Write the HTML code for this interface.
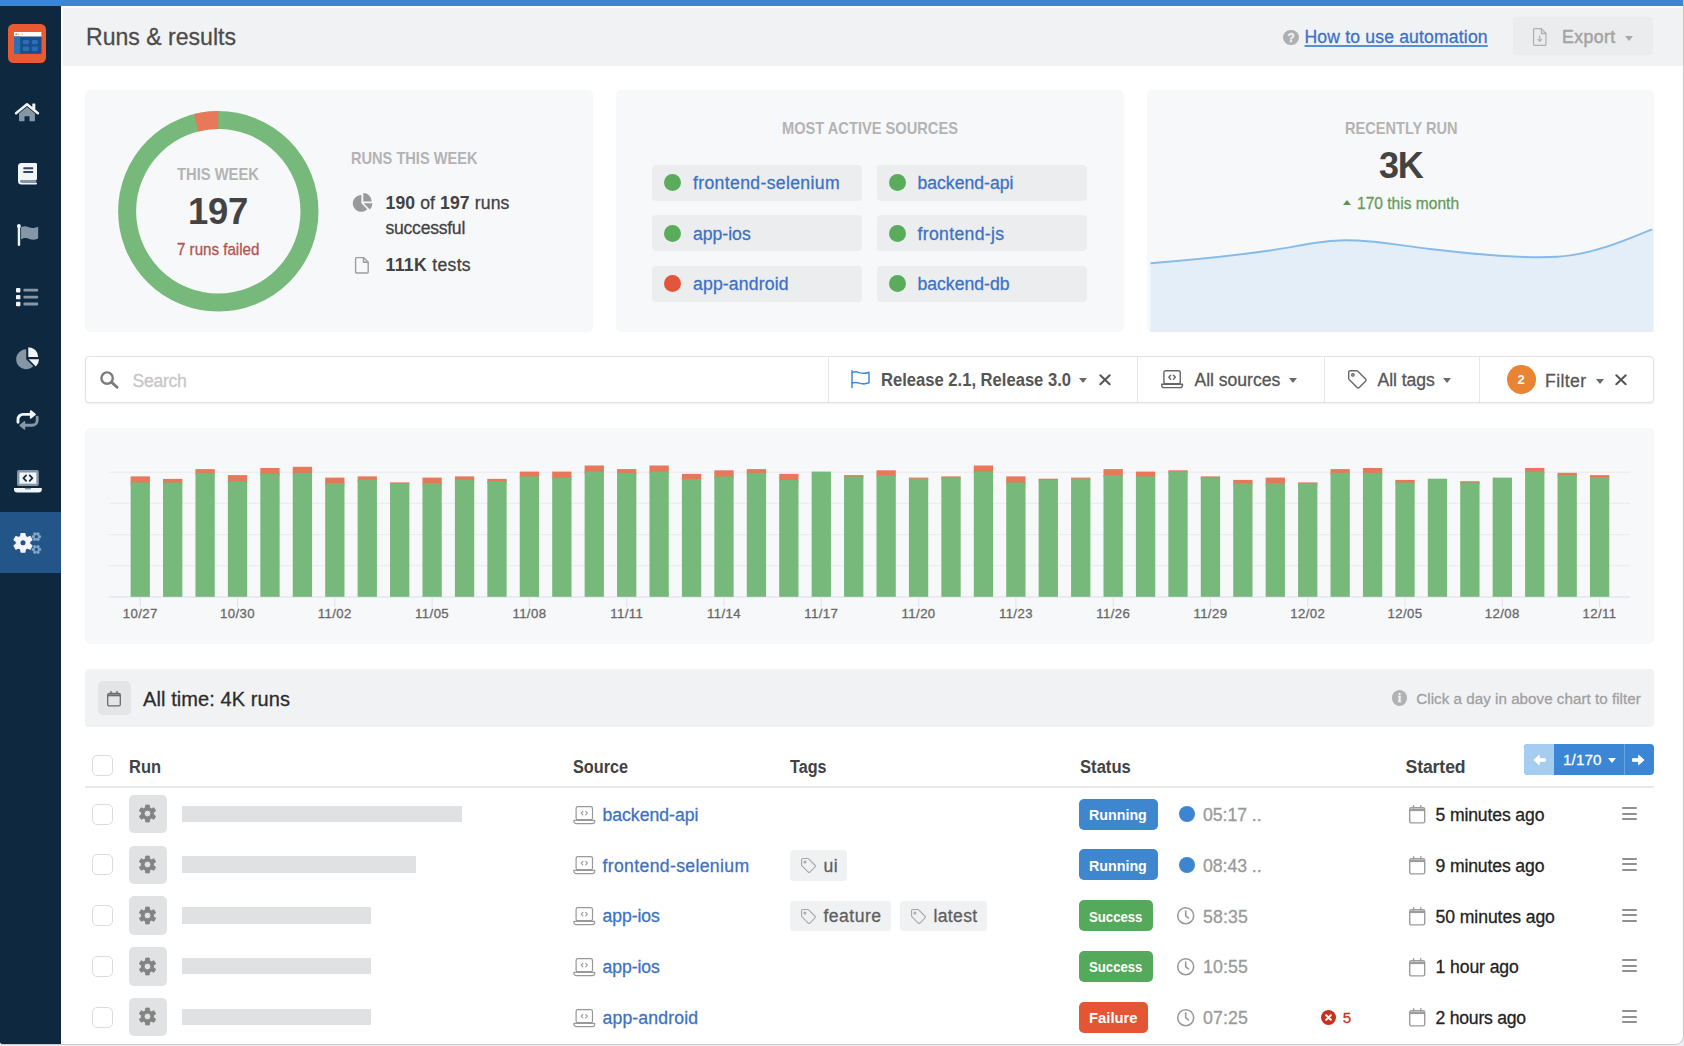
<!DOCTYPE html>
<html lang="en">
<head>
<meta charset="utf-8">
<title>Runs &amp; results</title>
<style>
*{box-sizing:border-box;margin:0;padding:0}
html,body{width:1684px;height:1046px;overflow:hidden;background:#eceef4}
body{font-family:"Liberation Sans",sans-serif;color:#222;position:relative}
#frame{position:absolute;left:0;top:0;width:1684px;height:1045px;background:#fff;border-right:1px solid #c6c6c6;border-bottom:1px solid #cbcbcb;border-bottom-right-radius:9px;border-bottom-left-radius:3px;overflow:hidden}
.abs{position:absolute}
.t{position:absolute;white-space:pre;line-height:1;-webkit-text-stroke:.28px currentColor}
a{color:#3b71c6;text-decoration:none}
.badge .t,.th,.cap,b,.nb{-webkit-text-stroke:0 transparent}
svg{position:absolute;overflow:visible}
#topbar{left:0;top:0;width:1684px;height:6px;background:#3a86d5}
#topline{left:0;top:6px;width:1684px;height:2px;background:#fbfaf8}
#side{left:0;top:6px;width:61px;height:1040px;background:#0e2840}
#side .act{left:0;top:506px;width:61px;height:61.3px;background:#245589}
#hdr{left:62.5px;top:7.6px;width:1622px;height:58.6px;background:#f1f2f4}
.card{position:absolute;background:#f7f8fa;border-radius:5px}
.cap{font-weight:700;color:#b3b3b3;font-size:16.4px}
.pill{position:absolute;height:36px;width:210px;background:#ecedef;border-radius:4px}
.pill i{position:absolute;left:12px;top:9.5px;width:17px;height:17px;border-radius:50%;background:#5aab5b}
.pill i.r{background:#e2553a}
.pill .t{left:41px;top:10.6px;font-size:17.6px;color:#3b71c6}
#fbar{left:85px;top:356px;width:1569px;height:47px;border:1px solid #e1e2e3;border-radius:4px;background:#fff;box-shadow:0 1px 2px rgba(0,0,0,.07)}
.fdiv{position:absolute;top:357px;width:1px;height:45px;background:#e6e7e8}
.ft{font-size:17.6px;color:#555;top:372px}
.caret{position:absolute;width:0;height:0;border-left:4.4px solid transparent;border-right:4.4px solid transparent;border-top:5.2px solid #6a6a6a}
.th{font-weight:700;font-size:17.6px;color:#424242;top:759.3px}
.cb{position:absolute;left:92px;width:21px;height:21px;border:1.5px solid #dcdcdc;border-radius:5px;background:#fff}
.gear{position:absolute;left:128.5px;width:38.5px;height:38.5px;border-radius:5px;background:#e1e2e3}
.ph{position:absolute;left:181.5px;height:16.6px;background:#e0e1e2}
.src{font-size:17.6px;color:#3b71c6;left:602.5px}
.tag{position:absolute;height:30.6px;background:#f0f1f2;border-radius:4px}
.tag .t{left:33.5px;top:7.7px;font-size:17.6px;color:#5e5e5e}
.badge{position:absolute;left:1079.3px;height:31px;border-radius:5px;color:#fff;font-weight:700;font-size:15.2px}
.badge .t{left:10.2px;top:8.5px}
.bl{background:#3e86ce}.gr{background:#55a95a}.rd{background:#e35533}
.dur{font-size:17.7px;color:#999;left:1203px}
.ago{font-size:17.6px;color:#222;left:1435.5px}
.ham{position:absolute;left:1622px;width:15.2px;height:2px;background:#909090;border-radius:1px}
</style>
</head>
<body>
<div id="frame">
<div id="topbar" class="abs"></div><div id="topline" class="abs"></div>
<div id="side" class="abs">
  <div class="abs act"></div>
</div>
<!-- logo -->
<div class="abs" style="left:7.900px;top:24.100px;width:38.600px;height:38.800px;border-radius:5.500px;background:#e85a31"></div>
<svg style="left:13.700px;top:32.300px" width="27.500" height="21.900" viewBox="0 0 27.500 21.900">
  <rect x="0" y="0" width="27.500" height="21.900" fill="#1b4f8b"/>
  <rect x="0" y="0" width="27.500" height="4.500" fill="#fdfcf8"/>
  <rect x="0" y="4.500" width="6.200" height="17.400" fill="#2f6fb8"/>
  <rect x="1.400" y="1.500" width="1.500" height="1.600" fill="#e8683f"/><rect x="3.600" y="1.500" width="1.500" height="1.600" fill="#f2c14e"/><rect x="7.400" y="1.500" width="1.500" height="1.600" fill="#bcd3c4"/>
  <rect x="8.800" y="7.900" width="6.300" height="4.300" rx="1.400" fill="#2c6db6"/><rect x="17.800" y="7.900" width="6.100" height="4.300" rx="1.400" fill="#2c6db6"/>
  <rect x="8.800" y="14.600" width="6.300" height="4.300" rx="1.400" fill="#2c6db6"/><rect x="17.800" y="14.600" width="6.100" height="4.300" rx="1.400" fill="#2c6db6"/>
</svg>
<svg style="left:15.300px;top:102.500px" width="24" height="18.800" viewBox="0 0 25.5 20">
<path d="M4.3 11.2 12.75 4.3l8.45 6.9v7.4a.9.9 0 0 1-.9.9h-4.9v-5.3h-5.3v5.3H5.2a.9.9 0 0 1-.9-.9z" fill="#8597a7"/>
<path d="M1.1 10.9 12.75 1.4 24.4 10.9" fill="none" stroke="#f2f5f8" stroke-width="2.7" stroke-linecap="round" stroke-linejoin="round"/>
<rect x="18.4" y=".6" width="3.2" height="6" rx=".5" fill="#f2f5f8"/></svg>
<svg style="left:18px;top:163px" width="19.200" height="21.800" viewBox="0 0 20.2 21.8" preserveAspectRatio="none">
<path d="M3.6 0h15.2a1.2 1.2 0 0 1 1.2 1.2v14.6a1.2 1.2 0 0 1-1.2 1.2H3.9a1.3 1.3 0 0 0 0 2.6h15.1a1 1 0 0 1 0 2H3.6A3.6 3.6 0 0 1 0 18V3.6A3.6 3.6 0 0 1 3.6 0z" fill="#f2f5f8"/>
<path d="M3.9 17h15.3v2.6H3.9a1.3 1.3 0 0 1 0-2.6z" fill="#8597a7"/>
<rect x="5.6" y="4.3" width="10.4" height="1.9" rx=".5" fill="#2c4763"/><rect x="5.6" y="8" width="10.4" height="1.9" rx=".5" fill="#2c4763"/></svg>
<svg style="left:16.600px;top:224px" width="21.200" height="22" viewBox="0 0 22 22" preserveAspectRatio="none">
<path d="M4.2 3.2c3-1.5 5.4-1 8 0s5.200 1.300 8.800-.3a.7.7 0 0 1 1 .6v10.300a1 1 0 0 1-.6.900c-3.400 1.500-6 1.200-8.600.2s-5-1.400-8.600.3z" fill="#8597a7"/>
<circle cx="2" cy="2.100" r="2" fill="#f2f5f8"/><rect x=".8" y="2" width="2.500" height="20" rx="1.200" fill="#f2f5f8"/></svg>
<svg style="left:15.800px;top:287.500px" width="23" height="18.200" viewBox="0 0 23 18.200">
<rect x="0" y="0" width="4.400" height="4.400" rx=".9" fill="#f2f5f8"/><rect x="0" y="6.900" width="4.400" height="4.400" rx=".9" fill="#f2f5f8"/><rect x="0" y="13.800" width="4.400" height="4.400" rx=".9" fill="#f2f5f8"/>
<rect x="7.400" y=".8" width="14.800" height="2.800" rx="1" fill="#8597a7"/><rect x="7.400" y="7.700" width="14.800" height="2.800" rx="1" fill="#8597a7"/><rect x="7.400" y="14.600" width="14.800" height="2.800" rx="1" fill="#8597a7"/></svg>
<svg style="left:15.800px;top:346.700px" width="23.200" height="22.400" viewBox="0 0 23.200 22.400">
<path d="M10.200 12.200V2.300A10 10 0 1 0 17.300 19.300z" fill="#8597a7"/>
<path d="M12.300 10.100V.2a9.900 9.900 0 0 1 9.900 9.900z" fill="#f2f5f8"/>
<path d="M12.600 12.200h10.400a10.300 10.300 0 0 1-3.100 7.300z" fill="#f2f5f8"/></svg>
<svg style="left:15.800px;top:410px" width="23.200" height="20.400" viewBox="0 0 23.200 20.400" fill="none" stroke-width="2.900" stroke-linecap="round" stroke-linejoin="round">
<path d="M2 12.300V9.400a5 5 0 0 1 5-5h8" stroke="#f2f5f8"/><path d="M14.700 1l4.400 3.400-4.400 3.600z" stroke="#f2f5f8" fill="#f2f5f8" stroke-width="1.600"/>
<path d="M21.200 7.200v3.100a5 5 0 0 1-5 5h-7.600" stroke="#8597a7"/><path d="M8.500 11.900l-4.300 3.500 4.300 3.600z" stroke="#8597a7" fill="#8597a7" stroke-width="1.600"/></svg>
<svg style="left:13.600px;top:470px" width="27.800" height="22.800" viewBox="0 0 27.800 22.800">
<rect x="3" y="0" width="21.800" height="16" rx="1.800" fill="#8597a7"/><rect x="5.400" y="2.500" width="17" height="11.200" fill="#f2f5f8"/>
<path d="M12.100 5.400 9.400 8.100l2.700 2.700M15.700 5.400l2.700 2.700-2.700 2.700" fill="none" stroke="#0e2840" stroke-width="1.700" stroke-linecap="round" stroke-linejoin="round"/>
<path d="M0 18h27.800v1.200a3.300 3.300 0 0 1-3.300 3.300H3.300A3.300 3.300 0 0 1 0 19.200z" fill="#f2f5f8"/><path d="M10.800 18h6.200v.6a1 1 0 0 1-1 1h-4.200a1 1 0 0 1-1-1z" fill="#8597a7"/></svg>
<svg style="left:12.800px;top:531px" width="28.500" height="23.400" viewBox="0 0 28.500 23.400">
<path d="M7.65,5.42 L8.02,2.51 L11.98,2.51 L12.35,5.42 L14.35,6.57 L17.06,5.44 L19.04,8.86 L16.70,10.65 L16.70,12.95 L19.04,14.74 L17.06,18.16 L14.35,17.03 L12.35,18.18 L11.98,21.09 L8.02,21.09 L7.65,18.18 L5.65,17.03 L2.94,18.16 L0.96,14.74 L3.30,12.95 L3.30,10.65 L0.96,8.86 L2.94,5.44 L5.65,6.57Z M6.90,11.80 a3.10,3.10 0 1,0 6.20,0 a3.10,3.10 0 1,0 -6.20,0Z" fill="#f4f6f8" fill-rule="evenodd" stroke="#f4f6f8" stroke-width="1.100" stroke-linejoin="round"/>
<path d="M26.57,4.48 L27.89,4.71 L27.89,6.69 L26.57,6.92 L26.04,7.84 L26.51,9.09 L24.78,10.09 L23.93,9.06 L22.87,9.06 L22.02,10.09 L20.29,9.09 L20.76,7.84 L20.23,6.92 L18.91,6.69 L18.91,4.71 L20.23,4.48 L20.76,3.56 L20.29,2.31 L22.02,1.31 L22.87,2.34 L23.93,2.34 L24.78,1.31 L26.51,2.31 L26.04,3.56Z M21.50,5.70 a1.90,1.90 0 1,0 3.80,0 a1.90,1.90 0 1,0 -3.80,0Z" fill="#86a8cc" fill-rule="evenodd" stroke="#86a8cc" stroke-width=".4" stroke-linejoin="round"/>
<path d="M26.57,17.28 L27.89,17.51 L27.89,19.49 L26.57,19.72 L26.04,20.64 L26.51,21.89 L24.78,22.89 L23.93,21.86 L22.87,21.86 L22.02,22.89 L20.29,21.89 L20.76,20.64 L20.23,19.72 L18.91,19.49 L18.91,17.51 L20.23,17.28 L20.76,16.36 L20.29,15.11 L22.02,14.11 L22.87,15.14 L23.93,15.14 L24.78,14.11 L26.51,15.11 L26.04,16.36Z M21.50,18.50 a1.90,1.90 0 1,0 3.80,0 a1.90,1.90 0 1,0 -3.80,0Z" fill="#86a8cc" fill-rule="evenodd" stroke="#86a8cc" stroke-width=".4" stroke-linejoin="round"/></svg>
<div id="hdr" class="abs"></div>
<span class="t" style="left:85.5px;top:25px;font-size:24px;color:#4b4b4b;letter-spacing:0;transform:scaleX(0.961);transform-origin:0 50%">Runs &amp; results</span>
<!-- help -->
<div class="abs" style="left:1283.400px;top:30px;width:15.400px;height:15.400px;border-radius:50%;background:#afafaf"></div>
<span class="t" style="left:1287.400px;top:32px;font-size:12px;font-weight:700;color:#f1f2f4">?</span>
<span class="t" style="left:1304.5px;top:28.5px;font-size:17.6px;letter-spacing:.16px;color:#3b71c6;text-decoration:underline;text-decoration-thickness:1.9px;text-underline-offset:1.600px;text-decoration-color:#5b8fd3">How to use automation</span>
<div class="abs" style="left:1513px;top:17px;width:140px;height:38px;border-radius:4px;background:#ebecee"></div>
<svg style="left:1532.700px;top:28px" width="13.500" height="18" viewBox="0 0 14.5 18" preserveAspectRatio="none" fill="none" stroke="#b0b0b0" stroke-width="1.300" stroke-linejoin="round" stroke-linecap="round">
  <path d="M1.8.6h7.2l4.9 4.9v10.7a1.2 1.2 0 0 1-1.2 1.2H1.8A1.2 1.2 0 0 1 .6 16.2V1.8A1.2 1.2 0 0 1 1.8.6z"/><path d="M9 .6v4.9h4.9"/><path d="M7.25 8v5.2M5.2 11.4l2.05 2 2.05-2"/>
</svg>
<span class="t" style="left:1562px;top:28.5px;font-size:17.6px;letter-spacing:.46px;color:#a3a3a3;-webkit-text-stroke:.5px #a3a3a3">Export</span>
<div class="caret" style="left:1624.6px;top:35.6px;border-top-color:#a8a8a8"></div>
<!-- card 1 -->
<div class="card" style="left:85px;top:90px;width:507.5px;height:241.5px"></div>
<svg style="left:117.5px;top:111px" width="200.6" height="200.6" viewBox="-100.3 -100.3 200.6 200.6">
  <circle cx="0" cy="0" r="91.2" fill="none" stroke="#76b97b" stroke-width="18"/>
  <path d="M-22.1 -88.500 A91.200 91.200 0 0 1 0 -91.200" fill="none" stroke="#e8785a" stroke-width="18"/>
</svg>
<span class="t cap" style="left:177px;top:165.800px;letter-spacing:0;transform:scaleX(0.9);transform-origin:0 50%">THIS WEEK</span>
<span class="t nb" style="left:188px;top:193.800px;font-size:36.500px;font-weight:700;color:#434343;letter-spacing:-.25px">197</span>
<span class="t" style="left:177px;top:241px;font-size:16.400px;color:#b4524a;letter-spacing:0;transform:scaleX(0.923);transform-origin:0 50%">7 runs failed</span>
<span class="t cap" style="left:351px;top:149.800px;letter-spacing:0;transform:scaleX(0.89);transform-origin:0 50%">RUNS THIS WEEK</span>
<svg style="left:352.500px;top:193px" width="19.500" height="18.800" viewBox="0 0 19.500 18.800">
  <path d="M8.400 10.300V2A8.400 8.400 0 1 0 14.300 16.200z" fill="#999"/>
  <path d="M10.300 8.400V0a8.400 8.400 0 0 1 8.400 8.400z" fill="#999"/>
  <path d="M10.600 10.300h8.800a8.700 8.700 0 0 1-2.600 6.200z" fill="#999"/>
</svg>
<span class="t" style="left:385.500px;top:194.700px;font-size:17.600px;color:#424242;letter-spacing:.11px"><b>190</b> of <b>197</b> runs</span>
<span class="t" style="left:385.500px;top:220.300px;font-size:17.600px;color:#424242;letter-spacing:-.26px">successful</span>
<svg style="left:355px;top:256.500px" width="13.800" height="16.600" viewBox="0 0 13.800 16.600" fill="none" stroke="#9d9d9d" stroke-width="1.400" stroke-linejoin="round">
  <path d="M1.700.6h6.800l4.700 4.700v9.600a1.100 1.100 0 0 1-1.100 1.100H1.700a1.100 1.100 0 0 1-1.100-1.100V1.700A1.100 1.100 0 0 1 1.700.6z"/><path d="M8.500.6v4.700h4.700"/>
</svg>
<span class="t" style="left:385.500px;top:257.300px;font-size:17.600px;color:#424242;letter-spacing:.33px"><b>111K</b> tests</span>

<!-- card 2 -->
<div class="card" style="left:616px;top:90px;width:507.500px;height:241.500px"></div>
<span class="t cap" style="left:781.500px;top:120px;letter-spacing:0;transform:scaleX(0.893);transform-origin:0 50%">MOST ACTIVE SOURCES</span>
<div class="pill" style="left:652px;top:164.500px"><i></i><span class="t" style="letter-spacing:.36px">frontend-selenium</span></div>
<div class="pill" style="left:876.500px;top:164.500px"><i></i><span class="t">backend-api</span></div>
<div class="pill" style="left:652px;top:215px"><i></i><span class="t">app-ios</span></div>
<div class="pill" style="left:876.500px;top:215px"><i></i><span class="t" style="letter-spacing:.35px">frontend-js</span></div>
<div class="pill" style="left:652px;top:265.500px"><i class="r"></i><span class="t" style="letter-spacing:.16px">app-android</span></div>
<div class="pill" style="left:876.500px;top:265.500px"><i></i><span class="t">backend-db</span></div>

<!-- card 3 -->
<div class="card" style="left:1147px;top:90px;width:507px;height:241.500px"></div>
<svg style="left:1147px;top:90px" width="507" height="242" viewBox="1147 90 507 242">
  <path d="M1150.500 263.200 C1185 260.500 1235 255.500 1270 250.500 C1300 246 1320 240.300 1345 240.200 C1375 240.100 1400 245.500 1430 249 C1470 253.700 1525 258.800 1557 256.800 C1592 254.600 1625 240.500 1652 229.300 L1653.500 228.700 L1653.500 332 L1150.500 332 Z" fill="#e3eef9"/>
  <path d="M1150.500 263.200 C1185 260.500 1235 255.500 1270 250.500 C1300 246 1320 240.300 1345 240.200 C1375 240.100 1400 245.500 1430 249 C1470 253.700 1525 258.800 1557 256.800 C1592 254.600 1625 240.500 1652 229.300" fill="none" stroke="#86bae8" stroke-width="1.900"/>
</svg>
<span class="t cap" style="left:1344.500px;top:120px;letter-spacing:0;transform:scaleX(0.889);transform-origin:0 50%">RECENTLY RUN</span>
<span class="t nb" style="left:1379px;top:148.200px;font-size:36px;font-weight:700;color:#434343;letter-spacing:-1.200px">3K</span>
<div class="abs" style="left:1343px;top:199.500px;width:0;height:0;border-left:4.300px solid transparent;border-right:4.300px solid transparent;border-bottom:5px solid #5d9650"></div>
<span class="t" style="left:1356.500px;top:194.500px;font-size:16.400px;color:#659a5a;letter-spacing:0;transform:scaleX(0.949);transform-origin:0 50%">170 this month</span>
<!-- filter bar -->
<div id="fbar" class="abs"></div>
<svg style="left:100.300px;top:370.800px" width="18.800" height="18" viewBox="0 0 18.800 18" fill="none" stroke="#7b7b7b" stroke-linecap="round">
  <circle cx="7.100" cy="7.100" r="5.700" stroke-width="2.400"/><path d="M11.600 11.300l5.400 5" stroke-width="2.900"/>
</svg>
<span class="t" style="left:132.500px;top:373px;font-size:17.600px;color:#c6c6c6;letter-spacing:-.27px">Search</span>
<div class="fdiv" style="left:827.500px"></div>
<svg style="left:851px;top:370.300px" width="19" height="18.200" viewBox="0 0 19 18.200" fill="none" stroke="#3f8bd8" stroke-width="1.500" stroke-linecap="round" stroke-linejoin="round">
  <path d="M1 .8v16.800"/><path d="M1 2.600c2.600-1.200 4.800-.9 7.200 0s5.400 1.300 9.800-.4v10.600c-4.400 1.700-7.100 1.300-9.800.3s-4.600-1.100-7.200.1"/>
</svg>
<span class="t ft nb" style="left:880.500px;font-weight:700;letter-spacing:0;transform:scaleX(0.943);transform-origin:0 50%">Release 2.1, Release 3.0</span>
<div class="caret" style="left:1079px;top:378px"></div>
<svg style="left:1098.500px;top:374.300px" width="12" height="11.600" viewBox="0 0 12 11.600" stroke="#555" stroke-width="2" stroke-linecap="round"><path d="M1.300 1.300l9.400 9M10.700 1.300l-9.400 9"/></svg>
<div class="fdiv" style="left:1136.500px"></div>
<svg style="left:1161.100px;top:370.200px" width="22.200" height="18.300" viewBox="0 0 22.200 18.300" fill="none" stroke="#666" stroke-width="1.400" stroke-linejoin="round" stroke-linecap="round">
  <rect x="2.900" y=".7" width="16.400" height="13" rx="1.800"/><path d="M.7 14.300h20.800v.9a2.400 2.400 0 0 1-2.400 2.400H3.100a2.400 2.400 0 0 1-2.400-2.400z"/><path d="M9.700 5.200 7.800 7.200l1.900 2M12.500 5.200l1.900 2-1.900 2" stroke-width="1.400"/>
</svg>
<span class="t ft" style="left:1194.500px;letter-spacing:-.03px">All sources</span>
<div class="caret" style="left:1289.200px;top:378px"></div>
<div class="fdiv" style="left:1323.500px"></div>
<svg style="left:1348px;top:370.200px" width="18.800" height="18.800" viewBox="0 0 18.800 18.800" fill="none" stroke="#666" stroke-width="1.400" stroke-linejoin="round">
  <path d="M.7 2.200A1.500 1.500 0 0 1 2.200.7h6.300a1.500 1.500 0 0 1 1.100.4l8 8a1.500 1.500 0 0 1 0 2.100l-6.400 6.400a1.500 1.500 0 0 1-2.100 0l-8-8a1.500 1.500 0 0 1-.4-1.100z"/><circle cx="4.900" cy="4.900" r="1.200"/>
</svg>
<span class="t ft" style="left:1377.500px;letter-spacing:-.06px">All tags</span>
<div class="caret" style="left:1443.400px;top:378px"></div>
<div class="fdiv" style="left:1479px"></div>
<div class="abs" style="left:1507px;top:365px;width:28.800px;height:28.800px;border-radius:50%;background:#e98435"></div>
<span class="t nb" style="left:1517.400px;top:373px;font-size:13px;font-weight:700;color:#fff">2</span>
<span class="t ft" style="left:1545px;letter-spacing:.4px;top:372.600px">Filter</span>
<div class="caret" style="left:1595.500px;top:378.500px"></div>
<svg style="left:1615.300px;top:374.300px" width="12" height="11.600" viewBox="0 0 12 11.600" stroke="#555" stroke-width="2" stroke-linecap="round"><path d="M1.300 1.300l9.400 9M10.700 1.300l-9.400 9"/></svg>

<!-- chart card -->
<div class="card" style="left:85px;top:428px;width:1569px;height:216px"></div>
<svg style="left:0;top:0" width="1684" height="1046" viewBox="0 0 1684 1046">
<rect x="109" y="471.7" width="1521" height="1.1" fill="#ebecee"/>
<rect x="109" y="502.8" width="1521" height="1.1" fill="#ebecee"/>
<rect x="109" y="534.0" width="1521" height="1.1" fill="#ebecee"/>
<rect x="109" y="565.1" width="1521" height="1.1" fill="#ebecee"/>
<rect x="109" y="596.4" width="1521" height="1.200" fill="#e0e1f1"/>
<rect x="130.60" y="476.4" width="19.3" height="8.0" fill="#e8785a"/>
<rect x="130.60" y="482.4" width="19.3" height="114.4" fill="#76b97b"/>
<rect x="163.03" y="478.9" width="19.3" height="5.5" fill="#e8785a"/>
<rect x="163.03" y="482.4" width="19.3" height="114.4" fill="#76b97b"/>
<rect x="195.46" y="469.1" width="19.3" height="5.7" fill="#e8785a"/>
<rect x="195.46" y="472.8" width="19.3" height="124.0" fill="#76b97b"/>
<rect x="227.89" y="475.1" width="19.3" height="8.1" fill="#e8785a"/>
<rect x="227.89" y="481.2" width="19.3" height="115.6" fill="#76b97b"/>
<rect x="260.32" y="468.0" width="19.3" height="7.9" fill="#e8785a"/>
<rect x="260.32" y="473.9" width="19.3" height="122.9" fill="#76b97b"/>
<rect x="292.75" y="466.8" width="19.3" height="8.0" fill="#e8785a"/>
<rect x="292.75" y="472.8" width="19.3" height="124.0" fill="#76b97b"/>
<rect x="325.18" y="477.6" width="19.3" height="7.9" fill="#e8785a"/>
<rect x="325.18" y="483.5" width="19.3" height="113.3" fill="#76b97b"/>
<rect x="357.61" y="476.4" width="19.3" height="5.5" fill="#e8785a"/>
<rect x="357.61" y="479.9" width="19.3" height="116.9" fill="#76b97b"/>
<rect x="390.04" y="482.4" width="19.3" height="3.1" fill="#e8785a"/>
<rect x="390.04" y="483.5" width="19.3" height="113.3" fill="#76b97b"/>
<rect x="422.47" y="477.6" width="19.3" height="7.9" fill="#e8785a"/>
<rect x="422.47" y="483.5" width="19.3" height="113.3" fill="#76b97b"/>
<rect x="454.90" y="476.4" width="19.3" height="5.5" fill="#e8785a"/>
<rect x="454.90" y="479.9" width="19.3" height="116.9" fill="#76b97b"/>
<rect x="487.33" y="478.9" width="19.3" height="4.3" fill="#e8785a"/>
<rect x="487.33" y="481.2" width="19.3" height="115.6" fill="#76b97b"/>
<rect x="519.76" y="471.6" width="19.3" height="6.8" fill="#e8785a"/>
<rect x="519.76" y="476.4" width="19.3" height="120.4" fill="#76b97b"/>
<rect x="552.19" y="471.6" width="19.3" height="8.0" fill="#e8785a"/>
<rect x="552.19" y="477.6" width="19.3" height="119.2" fill="#76b97b"/>
<rect x="584.62" y="465.5" width="19.3" height="8.1" fill="#e8785a"/>
<rect x="584.62" y="471.6" width="19.3" height="125.2" fill="#76b97b"/>
<rect x="617.05" y="469.1" width="19.3" height="5.7" fill="#e8785a"/>
<rect x="617.05" y="472.8" width="19.3" height="124.0" fill="#76b97b"/>
<rect x="649.48" y="465.5" width="19.3" height="8.1" fill="#e8785a"/>
<rect x="649.48" y="471.6" width="19.3" height="125.2" fill="#76b97b"/>
<rect x="681.91" y="473.9" width="19.3" height="7.0" fill="#e8785a"/>
<rect x="681.91" y="478.9" width="19.3" height="117.9" fill="#76b97b"/>
<rect x="714.34" y="470.3" width="19.3" height="8.1" fill="#e8785a"/>
<rect x="714.34" y="476.4" width="19.3" height="120.4" fill="#76b97b"/>
<rect x="746.77" y="469.1" width="19.3" height="5.7" fill="#e8785a"/>
<rect x="746.77" y="472.8" width="19.3" height="124.0" fill="#76b97b"/>
<rect x="779.20" y="473.9" width="19.3" height="8.0" fill="#e8785a"/>
<rect x="779.20" y="479.9" width="19.3" height="116.9" fill="#76b97b"/>
<rect x="811.63" y="471.6" width="19.3" height="125.2" fill="#76b97b"/>
<rect x="844.06" y="475.1" width="19.3" height="3.3" fill="#e8785a"/>
<rect x="844.06" y="476.4" width="19.3" height="120.4" fill="#76b97b"/>
<rect x="876.49" y="470.3" width="19.3" height="6.8" fill="#e8785a"/>
<rect x="876.49" y="475.1" width="19.3" height="121.7" fill="#76b97b"/>
<rect x="908.92" y="477.6" width="19.3" height="3.1" fill="#e8785a"/>
<rect x="908.92" y="478.7" width="19.3" height="118.1" fill="#76b97b"/>
<rect x="941.35" y="476.4" width="19.3" height="3.2" fill="#e8785a"/>
<rect x="941.35" y="477.6" width="19.3" height="119.2" fill="#76b97b"/>
<rect x="973.78" y="465.5" width="19.3" height="8.1" fill="#e8785a"/>
<rect x="973.78" y="471.6" width="19.3" height="125.2" fill="#76b97b"/>
<rect x="1006.21" y="476.4" width="19.3" height="8.0" fill="#e8785a"/>
<rect x="1006.21" y="482.4" width="19.3" height="114.4" fill="#76b97b"/>
<rect x="1038.64" y="478.7" width="19.3" height="3.1" fill="#e8785a"/>
<rect x="1038.64" y="479.8" width="19.3" height="117.0" fill="#76b97b"/>
<rect x="1071.07" y="477.6" width="19.3" height="3.1" fill="#e8785a"/>
<rect x="1071.07" y="478.7" width="19.3" height="118.1" fill="#76b97b"/>
<rect x="1103.50" y="469.1" width="19.3" height="8.0" fill="#e8785a"/>
<rect x="1103.50" y="475.1" width="19.3" height="121.7" fill="#76b97b"/>
<rect x="1135.93" y="471.6" width="19.3" height="6.8" fill="#e8785a"/>
<rect x="1135.93" y="476.4" width="19.3" height="120.4" fill="#76b97b"/>
<rect x="1168.36" y="470.3" width="19.3" height="3.3" fill="#e8785a"/>
<rect x="1168.36" y="471.6" width="19.3" height="125.2" fill="#76b97b"/>
<rect x="1200.79" y="476.4" width="19.3" height="3.2" fill="#e8785a"/>
<rect x="1200.79" y="477.6" width="19.3" height="119.2" fill="#76b97b"/>
<rect x="1233.22" y="479.9" width="19.3" height="5.6" fill="#e8785a"/>
<rect x="1233.22" y="483.5" width="19.3" height="113.3" fill="#76b97b"/>
<rect x="1265.65" y="477.6" width="19.3" height="7.9" fill="#e8785a"/>
<rect x="1265.65" y="483.5" width="19.3" height="113.3" fill="#76b97b"/>
<rect x="1298.08" y="482.4" width="19.3" height="3.1" fill="#e8785a"/>
<rect x="1298.08" y="483.5" width="19.3" height="113.3" fill="#76b97b"/>
<rect x="1330.51" y="469.1" width="19.3" height="5.7" fill="#e8785a"/>
<rect x="1330.51" y="472.8" width="19.3" height="124.0" fill="#76b97b"/>
<rect x="1362.94" y="468.0" width="19.3" height="6.8" fill="#e8785a"/>
<rect x="1362.94" y="472.8" width="19.3" height="124.0" fill="#76b97b"/>
<rect x="1395.37" y="479.9" width="19.3" height="4.5" fill="#e8785a"/>
<rect x="1395.37" y="482.4" width="19.3" height="114.4" fill="#76b97b"/>
<rect x="1427.80" y="478.7" width="19.3" height="118.1" fill="#76b97b"/>
<rect x="1460.23" y="481.2" width="19.3" height="3.2" fill="#e8785a"/>
<rect x="1460.23" y="482.4" width="19.3" height="114.4" fill="#76b97b"/>
<rect x="1492.66" y="477.6" width="19.3" height="119.2" fill="#76b97b"/>
<rect x="1525.09" y="468.0" width="19.3" height="5.6" fill="#e8785a"/>
<rect x="1525.09" y="471.6" width="19.3" height="125.2" fill="#76b97b"/>
<rect x="1557.52" y="472.8" width="19.3" height="4.3" fill="#e8785a"/>
<rect x="1557.52" y="475.1" width="19.3" height="121.7" fill="#76b97b"/>
<rect x="1589.95" y="475.1" width="19.3" height="4.5" fill="#e8785a"/>
<rect x="1589.95" y="477.6" width="19.3" height="119.2" fill="#76b97b"/>
<rect x="139.8" y="597.6" width="1" height="9.500" fill="#e1e2f0"/>
<text x="140.2" y="618.100" text-anchor="middle" font-size="13.200" letter-spacing=".4" fill="#686868" stroke="#686868" stroke-width=".3" font-family="Liberation Sans, sans-serif">10/27</text>
<rect x="237.0" y="597.6" width="1" height="9.500" fill="#e1e2f0"/>
<text x="237.5" y="618.100" text-anchor="middle" font-size="13.200" letter-spacing=".4" fill="#686868" stroke="#686868" stroke-width=".3" font-family="Liberation Sans, sans-serif">10/30</text>
<rect x="334.3" y="597.6" width="1" height="9.500" fill="#e1e2f0"/>
<text x="334.8" y="618.100" text-anchor="middle" font-size="13.200" letter-spacing=".4" fill="#686868" stroke="#686868" stroke-width=".3" font-family="Liberation Sans, sans-serif">11/02</text>
<rect x="431.6" y="597.6" width="1" height="9.500" fill="#e1e2f0"/>
<text x="432.1" y="618.100" text-anchor="middle" font-size="13.200" letter-spacing=".4" fill="#686868" stroke="#686868" stroke-width=".3" font-family="Liberation Sans, sans-serif">11/05</text>
<rect x="528.9" y="597.6" width="1" height="9.500" fill="#e1e2f0"/>
<text x="529.4" y="618.100" text-anchor="middle" font-size="13.200" letter-spacing=".4" fill="#686868" stroke="#686868" stroke-width=".3" font-family="Liberation Sans, sans-serif">11/08</text>
<rect x="626.2" y="597.6" width="1" height="9.500" fill="#e1e2f0"/>
<text x="626.7" y="618.100" text-anchor="middle" font-size="13.200" letter-spacing=".4" fill="#686868" stroke="#686868" stroke-width=".3" font-family="Liberation Sans, sans-serif">11/11</text>
<rect x="723.5" y="597.6" width="1" height="9.500" fill="#e1e2f0"/>
<text x="724.0" y="618.100" text-anchor="middle" font-size="13.200" letter-spacing=".4" fill="#686868" stroke="#686868" stroke-width=".3" font-family="Liberation Sans, sans-serif">11/14</text>
<rect x="820.8" y="597.6" width="1" height="9.500" fill="#e1e2f0"/>
<text x="821.3" y="618.100" text-anchor="middle" font-size="13.200" letter-spacing=".4" fill="#686868" stroke="#686868" stroke-width=".3" font-family="Liberation Sans, sans-serif">11/17</text>
<rect x="918.1" y="597.6" width="1" height="9.500" fill="#e1e2f0"/>
<text x="918.6" y="618.100" text-anchor="middle" font-size="13.200" letter-spacing=".4" fill="#686868" stroke="#686868" stroke-width=".3" font-family="Liberation Sans, sans-serif">11/20</text>
<rect x="1015.4" y="597.6" width="1" height="9.500" fill="#e1e2f0"/>
<text x="1015.9" y="618.100" text-anchor="middle" font-size="13.200" letter-spacing=".4" fill="#686868" stroke="#686868" stroke-width=".3" font-family="Liberation Sans, sans-serif">11/23</text>
<rect x="1112.7" y="597.6" width="1" height="9.500" fill="#e1e2f0"/>
<text x="1113.2" y="618.100" text-anchor="middle" font-size="13.200" letter-spacing=".4" fill="#686868" stroke="#686868" stroke-width=".3" font-family="Liberation Sans, sans-serif">11/26</text>
<rect x="1209.9" y="597.6" width="1" height="9.500" fill="#e1e2f0"/>
<text x="1210.4" y="618.100" text-anchor="middle" font-size="13.200" letter-spacing=".4" fill="#686868" stroke="#686868" stroke-width=".3" font-family="Liberation Sans, sans-serif">11/29</text>
<rect x="1307.2" y="597.6" width="1" height="9.500" fill="#e1e2f0"/>
<text x="1307.7" y="618.100" text-anchor="middle" font-size="13.200" letter-spacing=".4" fill="#686868" stroke="#686868" stroke-width=".3" font-family="Liberation Sans, sans-serif">12/02</text>
<rect x="1404.5" y="597.6" width="1" height="9.500" fill="#e1e2f0"/>
<text x="1405.0" y="618.100" text-anchor="middle" font-size="13.200" letter-spacing=".4" fill="#686868" stroke="#686868" stroke-width=".3" font-family="Liberation Sans, sans-serif">12/05</text>
<rect x="1501.8" y="597.6" width="1" height="9.500" fill="#e1e2f0"/>
<text x="1502.3" y="618.100" text-anchor="middle" font-size="13.200" letter-spacing=".4" fill="#686868" stroke="#686868" stroke-width=".3" font-family="Liberation Sans, sans-serif">12/08</text>
<rect x="1599.1" y="597.6" width="1" height="9.500" fill="#e1e2f0"/>
<text x="1599.6" y="618.100" text-anchor="middle" font-size="13.200" letter-spacing=".4" fill="#686868" stroke="#686868" stroke-width=".3" font-family="Liberation Sans, sans-serif">12/11</text>
</svg>

<!-- table band -->
<div class="abs" style="left:85px;top:668.500px;width:1569px;height:58px;border-radius:4px;background:#f1f2f4"></div>
<div class="abs" style="left:97.500px;top:681px;width:33.200px;height:33.500px;border-radius:5px;background:#e4e5e7"></div>
<svg style="left:107.300px;top:690.600px" width="14" height="15.600" viewBox="0 0 14 15.600" fill="none" stroke="#6a6a6a" stroke-width="1.300" stroke-linejoin="round">
  <rect x=".7" y="2.400" width="12.600" height="12.500" rx="1.500"/><path d="M.7 4.300h12.600" stroke-width="2"/><path d="M4 .5v2M10 .5v2" stroke-linecap="round"/>
</svg>
<span class="t" style="left:143px;top:689px;font-size:20px;color:#2b2b2b;letter-spacing:.09px">All time: 4K runs</span>
<div class="abs" style="left:1392px;top:690.300px;width:15.400px;height:15.400px;border-radius:50%;background:#b1b2b4"></div>
<span class="t" style="left:1397.700px;top:691.800px;font-size:12.500px;font-weight:700;color:#f1f2f4;font-family:'Liberation Serif',serif">i</span>
<span class="t" style="left:1416.300px;top:690.500px;font-size:15.200px;color:#a0a0a0;letter-spacing:.02px">Click a day in above chart to filter</span>

<!-- table head -->
<div class="cb" style="top:755px"></div>
<span class="t th" style="left:128.500px;letter-spacing:0;transform:scaleX(0.936);transform-origin:0 50%">Run</span>
<span class="t th" style="left:572.500px;letter-spacing:0;transform:scaleX(0.925);transform-origin:0 50%">Source</span>
<span class="t th" style="left:789.500px;letter-spacing:0;transform:scaleX(0.917);transform-origin:0 50%">Tags</span>
<span class="t th" style="left:1079.500px;letter-spacing:0;transform:scaleX(0.945);transform-origin:0 50%">Status</span>
<span class="t th" style="left:1405.500px;letter-spacing:-.09px">Started</span>
<div class="abs" style="left:85px;top:785.500px;width:1569px;height:2px;background:#e9e9ea"></div>
<!-- pager -->
<div class="abs" style="left:1524px;top:744px;width:130px;height:31.300px;border-radius:4px;background:#3b86d5;overflow:hidden">
  <div class="abs" style="left:0;top:0;width:29.500px;height:31.300px;background:#a4cdf0"></div>
  <div class="abs" style="left:100px;top:0;width:1px;height:31.300px;background:#6ba5e0"></div>
</div>
<svg style="left:1533.300px;top:753.600px" width="12.800" height="12" viewBox="0 0 12.800 12" fill="#fff" stroke="#fff" stroke-width="1" stroke-linejoin="round"><path d="M12.300 4.700H6.200V1.300L.7 6l5.500 4.700V7.300h6.100z"/></svg>
<span class="t" style="left:1563px;top:752.300px;font-size:15.200px;color:#fff;letter-spacing:.12px">1/170</span>
<div class="caret" style="left:1607.500px;top:757.800px;border-top-color:#fff"></div>
<svg style="left:1631.800px;top:753.600px" width="12.800" height="12" viewBox="0 0 12.800 12" fill="#fff" stroke="#fff" stroke-width="1" stroke-linejoin="round"><path d="M.5 4.700h6.100V1.300L12.100 6l-5.500 4.700V7.300H.5z"/></svg>
<div class="cb" style="top:803.5px"></div>
<div class="gear" style="top:794.7px"></div>
<svg style="left:138.35px;top:804.3px" width="19" height="19" viewBox="0 0 19 19"><path d="M7.39,3.78 L7.71,1.09 L11.29,1.09 L11.61,3.78 L13.40,4.81 L15.89,3.75 L17.68,6.84 L15.51,8.47 L15.51,10.53 L17.68,12.16 L15.89,15.25 L13.40,14.19 L11.61,15.22 L11.29,17.91 L7.71,17.91 L7.39,15.22 L5.60,14.19 L3.11,15.25 L1.32,12.16 L3.49,10.53 L3.49,8.47 L1.32,6.84 L3.11,3.75 L5.60,4.81Z M6.20,9.50 a3.30,3.30 0 1,0 6.60,0 a3.30,3.30 0 1,0 -6.60,0Z" fill="#838383" fill-rule="evenodd" stroke="#838383" stroke-width=".9" stroke-linejoin="round"/></svg>
<div class="ph" style="top:805.6px;width:280.5px"></div>
<svg style="left:572.500px;top:805.6px" width="22.600" height="18.300" viewBox="0 0 22.200 18.300" fill="none" stroke="#999" stroke-width="1.200" stroke-linejoin="round" stroke-linecap="round"><rect x="2.900" y=".7" width="16.400" height="13" rx="1.800"/><path d="M.7 14.300h20.800v.9a2.400 2.400 0 0 1-2.400 2.400H3.100a2.400 2.400 0 0 1-2.400-2.400z"/><path d="M9.700 5.300 8 7.100l1.700 1.800M12.500 5.300l1.700 1.800-1.700 1.800" stroke-width="1.100"/></svg>
<span class="t src" style="top:806.8px;letter-spacing:0px">backend-api</span>
<div class="badge bl" style="top:798.5px;width:78.4px"><span class="t" style="transform:scaleX(0.939);transform-origin:0 50%">Running</span></div>
<div class="abs" style="left:1179.200px;top:806.4px;width:16px;height:16px;border-radius:50%;background:#3d86cf"></div>
<span class="t dur" style="top:807.0px;letter-spacing:-0.06px">05:17 ..</span>
<svg style="left:1409px;top:805.2px" width="16.400" height="18.600" viewBox="0 0 16.400 18.600" fill="none" stroke="#9c9c9c" stroke-width="1.400" stroke-linejoin="round"><rect x=".7" y="2.800" width="15" height="15.100" rx="1.700"/><path d="M.7 5h15" stroke-width="2.200"/><path d="M4.600.6v2.400M11.800.6v2.400" stroke-linecap="round"/></svg>
<span class="t ago" style="top:807.0px;letter-spacing:-0.13px">5 minutes ago</span>
<div class="ham" style="top:807.1px"></div>
<div class="ham" style="top:812.6px"></div>
<div class="ham" style="top:818.1px"></div>
<div class="cb" style="top:854.3px"></div>
<div class="gear" style="top:845.5px"></div>
<svg style="left:138.35px;top:855.1px" width="19" height="19" viewBox="0 0 19 19"><path d="M7.39,3.78 L7.71,1.09 L11.29,1.09 L11.61,3.78 L13.40,4.81 L15.89,3.75 L17.68,6.84 L15.51,8.47 L15.51,10.53 L17.68,12.16 L15.89,15.25 L13.40,14.19 L11.61,15.22 L11.29,17.91 L7.71,17.91 L7.39,15.22 L5.60,14.19 L3.11,15.25 L1.32,12.16 L3.49,10.53 L3.49,8.47 L1.32,6.84 L3.11,3.75 L5.60,4.81Z M6.20,9.50 a3.30,3.30 0 1,0 6.60,0 a3.30,3.30 0 1,0 -6.60,0Z" fill="#838383" fill-rule="evenodd" stroke="#838383" stroke-width=".9" stroke-linejoin="round"/></svg>
<div class="ph" style="top:856.4px;width:234px"></div>
<svg style="left:572.500px;top:856.4px" width="22.600" height="18.300" viewBox="0 0 22.200 18.300" fill="none" stroke="#999" stroke-width="1.200" stroke-linejoin="round" stroke-linecap="round"><rect x="2.900" y=".7" width="16.400" height="13" rx="1.800"/><path d="M.7 14.300h20.800v.9a2.400 2.400 0 0 1-2.400 2.400H3.100a2.400 2.400 0 0 1-2.400-2.400z"/><path d="M9.700 5.300 8 7.100l1.700 1.800M12.500 5.300l1.700 1.800-1.700 1.800" stroke-width="1.100"/></svg>
<span class="t src" style="top:857.6px;letter-spacing:0.36px">frontend-selenium</span>
<div class="tag" style="left:790px;top:850.0px;width:57px"><svg style="left:10.500px;top:8px" width="15" height="15" viewBox="0 0 18.800 18.800" fill="none" stroke="#a8a8a8" stroke-width="1.400" stroke-linejoin="round"><path d="M.7 2.200A1.500 1.500 0 0 1 2.200.7h6.300a1.500 1.500 0 0 1 1.100.4l8 8a1.500 1.500 0 0 1 0 2.100l-6.400 6.400a1.500 1.500 0 0 1-2.100 0l-8-8a1.500 1.500 0 0 1-.4-1.100z"/><circle cx="4.900" cy="4.900" r="1.200"/></svg><span class="t" style="letter-spacing:0.55px">ui</span></div>
<div class="badge bl" style="top:849.3px;width:78.4px"><span class="t" style="transform:scaleX(0.939);transform-origin:0 50%">Running</span></div>
<div class="abs" style="left:1179.200px;top:857.2px;width:16px;height:16px;border-radius:50%;background:#3d86cf"></div>
<span class="t dur" style="top:857.8px;letter-spacing:-0.06px">08:43 ..</span>
<svg style="left:1409px;top:856.0px" width="16.400" height="18.600" viewBox="0 0 16.400 18.600" fill="none" stroke="#9c9c9c" stroke-width="1.400" stroke-linejoin="round"><rect x=".7" y="2.800" width="15" height="15.100" rx="1.700"/><path d="M.7 5h15" stroke-width="2.200"/><path d="M4.600.6v2.400M11.800.6v2.400" stroke-linecap="round"/></svg>
<span class="t ago" style="top:857.8px;letter-spacing:-0.13px">9 minutes ago</span>
<div class="ham" style="top:857.9px"></div>
<div class="ham" style="top:863.4px"></div>
<div class="ham" style="top:868.9px"></div>
<div class="cb" style="top:905.0px"></div>
<div class="gear" style="top:896.2px"></div>
<svg style="left:138.35px;top:905.8px" width="19" height="19" viewBox="0 0 19 19"><path d="M7.39,3.78 L7.71,1.09 L11.29,1.09 L11.61,3.78 L13.40,4.81 L15.89,3.75 L17.68,6.84 L15.51,8.47 L15.51,10.53 L17.68,12.16 L15.89,15.25 L13.40,14.19 L11.61,15.22 L11.29,17.91 L7.71,17.91 L7.39,15.22 L5.60,14.19 L3.11,15.25 L1.32,12.16 L3.49,10.53 L3.49,8.47 L1.32,6.84 L3.11,3.75 L5.60,4.81Z M6.20,9.50 a3.30,3.30 0 1,0 6.60,0 a3.30,3.30 0 1,0 -6.60,0Z" fill="#838383" fill-rule="evenodd" stroke="#838383" stroke-width=".9" stroke-linejoin="round"/></svg>
<div class="ph" style="top:907.1px;width:189.5px"></div>
<svg style="left:572.500px;top:907.1px" width="22.600" height="18.300" viewBox="0 0 22.200 18.300" fill="none" stroke="#999" stroke-width="1.200" stroke-linejoin="round" stroke-linecap="round"><rect x="2.900" y=".7" width="16.400" height="13" rx="1.800"/><path d="M.7 14.300h20.800v.9a2.400 2.400 0 0 1-2.400 2.400H3.100a2.400 2.400 0 0 1-2.400-2.400z"/><path d="M9.700 5.300 8 7.100l1.700 1.800M12.500 5.300l1.700 1.800-1.700 1.800" stroke-width="1.100"/></svg>
<span class="t src" style="top:908.3px;letter-spacing:-0.05px">app-ios</span>
<div class="tag" style="left:790px;top:900.7px;width:101px"><svg style="left:10.500px;top:8px" width="15" height="15" viewBox="0 0 18.800 18.800" fill="none" stroke="#a8a8a8" stroke-width="1.400" stroke-linejoin="round"><path d="M.7 2.200A1.500 1.500 0 0 1 2.200.7h6.300a1.500 1.500 0 0 1 1.100.4l8 8a1.500 1.500 0 0 1 0 2.100l-6.400 6.400a1.500 1.500 0 0 1-2.100 0l-8-8a1.500 1.500 0 0 1-.4-1.100z"/><circle cx="4.900" cy="4.900" r="1.200"/></svg><span class="t" style="letter-spacing:0.45px">feature</span></div>
<div class="tag" style="left:900px;top:900.7px;width:87px"><svg style="left:10.500px;top:8px" width="15" height="15" viewBox="0 0 18.800 18.800" fill="none" stroke="#a8a8a8" stroke-width="1.400" stroke-linejoin="round"><path d="M.7 2.200A1.500 1.500 0 0 1 2.200.7h6.300a1.500 1.500 0 0 1 1.100.4l8 8a1.500 1.500 0 0 1 0 2.100l-6.400 6.400a1.500 1.500 0 0 1-2.100 0l-8-8a1.500 1.500 0 0 1-.4-1.100z"/><circle cx="4.900" cy="4.900" r="1.200"/></svg><span class="t" style="letter-spacing:0.32px">latest</span></div>
<div class="badge gr" style="top:900.0px;width:74px"><span class="t" style="transform:scaleX(0.867);transform-origin:0 50%">Success</span></div>
<svg style="left:1177px;top:907.0px" width="17.400" height="17.400" viewBox="0 0 17.400 17.400" fill="none" stroke="#999" stroke-width="1.600" stroke-linecap="round" stroke-linejoin="round"><circle cx="8.700" cy="8.700" r="8"/><path d="M8.700 4v4.900l2.800 2"/></svg>
<span class="t dur" style="top:908.5px;letter-spacing:0.15px">58:35</span>
<svg style="left:1409px;top:906.7px" width="16.400" height="18.600" viewBox="0 0 16.400 18.600" fill="none" stroke="#9c9c9c" stroke-width="1.400" stroke-linejoin="round"><rect x=".7" y="2.800" width="15" height="15.100" rx="1.700"/><path d="M.7 5h15" stroke-width="2.200"/><path d="M4.600.6v2.400M11.800.6v2.400" stroke-linecap="round"/></svg>
<span class="t ago" style="top:908.5px;letter-spacing:-0.07px">50 minutes ago</span>
<div class="ham" style="top:908.6px"></div>
<div class="ham" style="top:914.1px"></div>
<div class="ham" style="top:919.6px"></div>
<div class="cb" style="top:955.8px"></div>
<div class="gear" style="top:947.0px"></div>
<svg style="left:138.35px;top:956.6px" width="19" height="19" viewBox="0 0 19 19"><path d="M7.39,3.78 L7.71,1.09 L11.29,1.09 L11.61,3.78 L13.40,4.81 L15.89,3.75 L17.68,6.84 L15.51,8.47 L15.51,10.53 L17.68,12.16 L15.89,15.25 L13.40,14.19 L11.61,15.22 L11.29,17.91 L7.71,17.91 L7.39,15.22 L5.60,14.19 L3.11,15.25 L1.32,12.16 L3.49,10.53 L3.49,8.47 L1.32,6.84 L3.11,3.75 L5.60,4.81Z M6.20,9.50 a3.30,3.30 0 1,0 6.60,0 a3.30,3.30 0 1,0 -6.60,0Z" fill="#838383" fill-rule="evenodd" stroke="#838383" stroke-width=".9" stroke-linejoin="round"/></svg>
<div class="ph" style="top:957.9px;width:189.5px"></div>
<svg style="left:572.500px;top:957.9px" width="22.600" height="18.300" viewBox="0 0 22.200 18.300" fill="none" stroke="#999" stroke-width="1.200" stroke-linejoin="round" stroke-linecap="round"><rect x="2.900" y=".7" width="16.400" height="13" rx="1.800"/><path d="M.7 14.300h20.800v.9a2.400 2.400 0 0 1-2.400 2.400H3.100a2.400 2.400 0 0 1-2.400-2.400z"/><path d="M9.700 5.300 8 7.100l1.700 1.800M12.500 5.300l1.700 1.800-1.700 1.800" stroke-width="1.100"/></svg>
<span class="t src" style="top:959.1px;letter-spacing:-0.05px">app-ios</span>
<div class="badge gr" style="top:950.8px;width:74px"><span class="t" style="transform:scaleX(0.867);transform-origin:0 50%">Success</span></div>
<svg style="left:1177px;top:957.8px" width="17.400" height="17.400" viewBox="0 0 17.400 17.400" fill="none" stroke="#999" stroke-width="1.600" stroke-linecap="round" stroke-linejoin="round"><circle cx="8.700" cy="8.700" r="8"/><path d="M8.700 4v4.900l2.800 2"/></svg>
<span class="t dur" style="top:959.3px;letter-spacing:0.15px">10:55</span>
<svg style="left:1409px;top:957.5px" width="16.400" height="18.600" viewBox="0 0 16.400 18.600" fill="none" stroke="#9c9c9c" stroke-width="1.400" stroke-linejoin="round"><rect x=".7" y="2.800" width="15" height="15.100" rx="1.700"/><path d="M.7 5h15" stroke-width="2.200"/><path d="M4.600.6v2.400M11.800.6v2.400" stroke-linecap="round"/></svg>
<span class="t ago" style="top:959.3px;letter-spacing:-0.09px">1 hour ago</span>
<div class="ham" style="top:959.4px"></div>
<div class="ham" style="top:964.9px"></div>
<div class="ham" style="top:970.4px"></div>
<div class="cb" style="top:1006.5px"></div>
<div class="gear" style="top:997.7px"></div>
<svg style="left:138.35px;top:1007.3px" width="19" height="19" viewBox="0 0 19 19"><path d="M7.39,3.78 L7.71,1.09 L11.29,1.09 L11.61,3.78 L13.40,4.81 L15.89,3.75 L17.68,6.84 L15.51,8.47 L15.51,10.53 L17.68,12.16 L15.89,15.25 L13.40,14.19 L11.61,15.22 L11.29,17.91 L7.71,17.91 L7.39,15.22 L5.60,14.19 L3.11,15.25 L1.32,12.16 L3.49,10.53 L3.49,8.47 L1.32,6.84 L3.11,3.75 L5.60,4.81Z M6.20,9.50 a3.30,3.30 0 1,0 6.60,0 a3.30,3.30 0 1,0 -6.60,0Z" fill="#838383" fill-rule="evenodd" stroke="#838383" stroke-width=".9" stroke-linejoin="round"/></svg>
<div class="ph" style="top:1008.6px;width:189.5px"></div>
<svg style="left:572.500px;top:1008.6px" width="22.600" height="18.300" viewBox="0 0 22.200 18.300" fill="none" stroke="#999" stroke-width="1.200" stroke-linejoin="round" stroke-linecap="round"><rect x="2.900" y=".7" width="16.400" height="13" rx="1.800"/><path d="M.7 14.300h20.800v.9a2.400 2.400 0 0 1-2.400 2.400H3.100a2.400 2.400 0 0 1-2.400-2.400z"/><path d="M9.700 5.300 8 7.100l1.700 1.800M12.500 5.300l1.700 1.800-1.700 1.800" stroke-width="1.100"/></svg>
<span class="t src" style="top:1009.8px;letter-spacing:0.16px">app-android</span>
<div class="badge rd" style="top:1001.5px;width:69.1px"><span class="t" style="transform:scaleX(0.976);transform-origin:0 50%">Failure</span></div>
<svg style="left:1177px;top:1008.5px" width="17.400" height="17.400" viewBox="0 0 17.400 17.400" fill="none" stroke="#999" stroke-width="1.600" stroke-linecap="round" stroke-linejoin="round"><circle cx="8.700" cy="8.700" r="8"/><path d="M8.700 4v4.900l2.800 2"/></svg>
<span class="t dur" style="top:1010.0px;letter-spacing:0.15px">07:25</span>
<div class="abs" style="left:1321px;top:1009.6px;width:15.400px;height:15.400px;border-radius:50%;background:#c9301c"></div>
<svg style="left:1325.200px;top:1013.8px" width="7" height="7" viewBox="0 0 7 7" stroke="#fff" stroke-width="2" stroke-linecap="round"><path d="M1.200 1.200l4.600 4.600M5.800 1.200 1.200 5.800"/></svg>
<span class="t" style="left:1342.800px;top:1009.5px;font-size:15.200px;color:#c9301c">5</span>
<svg style="left:1409px;top:1008.2px" width="16.400" height="18.600" viewBox="0 0 16.400 18.600" fill="none" stroke="#9c9c9c" stroke-width="1.400" stroke-linejoin="round"><rect x=".7" y="2.800" width="15" height="15.100" rx="1.700"/><path d="M.7 5h15" stroke-width="2.200"/><path d="M4.600.6v2.400M11.800.6v2.400" stroke-linecap="round"/></svg>
<span class="t ago" style="top:1010.0px;letter-spacing:-0.23px">2 hours ago</span>
<div class="ham" style="top:1010.1px"></div>
<div class="ham" style="top:1015.6px"></div>
<div class="ham" style="top:1021.1px"></div>
</div>
</body>
</html>
